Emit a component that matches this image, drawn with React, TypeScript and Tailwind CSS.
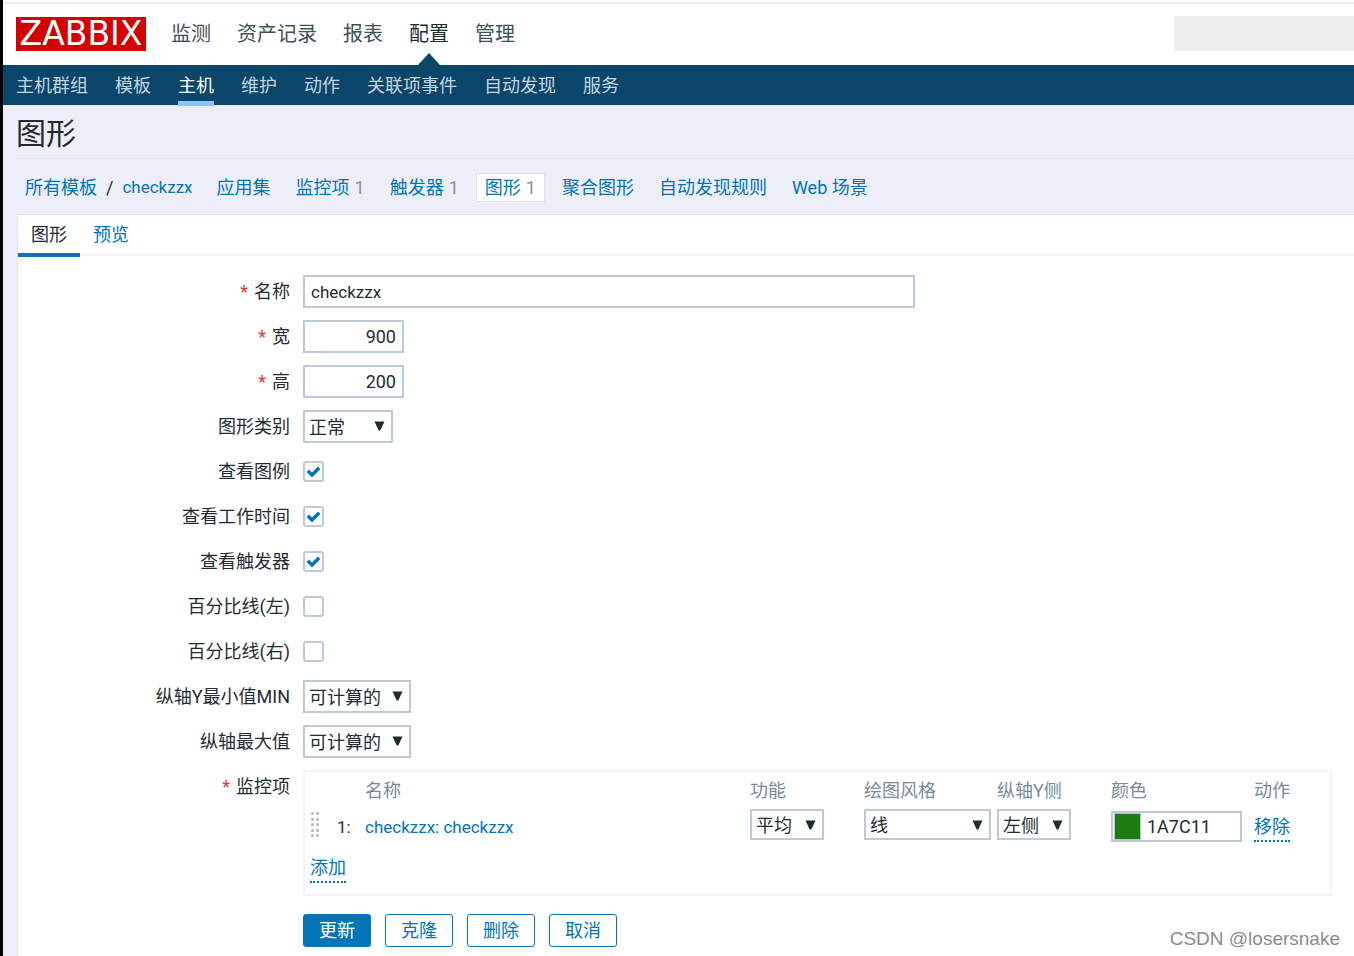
import type { ReactNode } from "react";

const mainMenu = ["监测", "资产记录", "报表", "配置", "管理"];
const subMenu = ["主机群组", "模板", "主机", "维护", "动作", "关联项事件", "自动发现", "服务"];

const objectLinks = [
  { label: "应用集" },
  { label: "监控项", count: 1 },
  { label: "触发器", count: 1 },
  { label: "图形", count: 1, active: true },
  { label: "聚合图形" },
  { label: "自动发现规则" },
  { label: "Web 场景" },
];

const checkboxes = [
  { id: "legend", label: "查看图例", checked: true },
  { id: "work-period", label: "查看工作时间", checked: true },
  { id: "triggers", label: "查看触发器", checked: true },
  { id: "percent-left", label: "百分比线(左)", checked: false },
  { id: "percent-right", label: "百分比线(右)", checked: false },
];

const Row = ({ id, label, required, children }: { id: string; label: string; required?: boolean; children: ReactNode }) => (
  <div className="flex gap-[13px]">
    <label htmlFor={id} className="w-[272px] shrink-0 text-right leading-[33px]">
      {required && <span className="mr-1.5 text-[#e33734]">*</span>}
      {label}
    </label>
    {children}
  </div>
);

const Select = ({ id, value, label, className }: { id: string; value: string; label?: string; className: string }) => (
  <div className="relative inline-block align-top">
    <select
      id={id}
      aria-label={label}
      className={`block appearance-none border-2 border-[#bfcad6] bg-white pt-[3px] pl-1 text-[18px] leading-6 outline-none ${className}`}
    >
      <option>{value}</option>
    </select>
    <svg className="pointer-events-none absolute top-[11px] right-2 h-[10px] w-[11px]" viewBox="0 0 11 10">
      <path d="M0.5 0.5h10L6.3 9.5H4.7z" fill="#1f2c33" />
    </svg>
  </div>
);

const Checkbox = ({ id, checked }: { id: string; checked: boolean }) => (
  <div className="relative my-[6px] h-[21px] w-[21px]">
    <input
      id={id}
      type="checkbox"
      defaultChecked={checked}
      className="peer block h-[21px] w-[21px] appearance-none rounded-[3px] border-2 border-[#bfcad6] bg-white"
    />
    <svg className="pointer-events-none absolute inset-0 hidden peer-checked:block" width="21" height="21" viewBox="0 0 21 21">
      <path d="M4.8 9.8l4.2 4.2 7.2-7.2" fill="none" stroke="#0275b8" strokeWidth="3.4" />
    </svg>
  </div>
);

const DragHandle = () => (
  <svg width="10" height="26" viewBox="0 0 10 26" fill="#b4bfc9">
    {[0, 6, 11, 17, 22].map((y) => (
      <g key={y}>
        <rect x="1" y={y} width="3" height="3" rx="1" />
        <rect x="6" y={y} width="3" height="3" rx="1" />
      </g>
    ))}
  </svg>
);

const Header = () => (
  <header>
    <div className="flex h-[65px] items-center justify-between bg-white pt-0.5 pl-[13px]">
      <div className="flex items-center gap-[25px]">
        <a
          href="#"
          className="flex h-[34px] w-[130px] items-center justify-center bg-[#d40000] font-['DejaVu_Sans',sans-serif] text-[33px] leading-none text-white"
        >
          ZABBIX
        </a>
        <nav className="flex gap-[26px] pt-px text-[20px] text-[#3f5059]">
          {mainMenu.map((item) => (
            <a key={item} href="#" className={item === "配置" ? "relative text-[#1f2c33]" : ""}>
              {item}
              {item === "配置" && (
                <svg className="absolute top-[33px] left-2" width="24" height="13" viewBox="0 0 24 13">
                  <path d="M1 13L12 1l11 12z" fill="#0a466a" />
                </svg>
              )}
            </a>
          ))}
        </nav>
      </div>
      <div className="h-[35px] w-[180px] bg-[#eeeeee]" />
    </div>
    <nav className="flex h-10 gap-[27px] bg-[#0a466a] pl-[13px] text-[18px] leading-[42px] text-[#c3d4e0]">
      {subMenu.map((item) => (
        <a key={item} href="#" className={item === "主机" ? "h-[41px] border-b-5 border-[#85c8f8] text-white" : ""}>
          {item}
        </a>
      ))}
    </nav>
  </header>
);

const Breadcrumbs = () => (
  <nav className="flex h-[55px] items-center pt-0.5 text-[18px] text-[#0275b8]">
    <div className="mr-4 flex items-center gap-[9px] pl-[9px]">
      <a href="#">所有模板</a>
      <span className="text-[#1f2c33]">/</span>
      <a href="#" className="text-[17px]">checkzzx</a>
    </div>
    <div className="flex items-center gap-[9px]">
      {objectLinks.map(({ label, count, active }) => (
        <a
          key={label}
          href="#"
          className={active ? "border border-[#dfe4e7] bg-white px-2 leading-[27px]" : "px-2 leading-[27px]"}
        >
          {label}
          {count && <span className="ml-[5px] text-[#8696a0]">{count}</span>}
        </a>
      ))}
    </div>
  </nav>
);

const ItemsTable = () => (
  <div className="mr-[22px] min-w-0 flex-1 border-2 border-[#f1f1f8] px-[5px] pt-1 pb-[9px]">
    <table className="w-full table-fixed text-left">
      <colgroup>
        <col className="w-[27px]" />
        <col className="w-[28px]" />
        <col />
        <col className="w-[114px]" />
        <col className="w-[133px]" />
        <col className="w-[114px]" />
        <col className="w-[143px]" />
        <col className="w-[71px]" />
      </colgroup>
      <thead className="text-[#768d99]">
        <tr className="h-[29px]">
          <th className="font-normal" />
          <th className="font-normal" />
          <th className="font-normal">名称</th>
          <th className="font-normal">功能</th>
          <th className="font-normal">绘图风格</th>
          <th className="font-normal">纵轴Y侧</th>
          <th className="font-normal">颜色</th>
          <th className="font-normal">动作</th>
        </tr>
      </thead>
      <tbody>
        <tr className="h-[42px]">
          <td className="pb-0.5"><DragHandle /></td>
          <td className="pt-1 text-[17px]">1:</td>
          <td className="pt-1 text-[17px]">
            <a href="#" className="text-[#0275b8]">checkzzx: checkzzx</a>
          </td>
          <td className="pb-1"><Select id="calc-fnc" label="功能" value="平均" className="h-[31px] w-[74px]" /></td>
          <td className="pb-1"><Select id="draw-type" label="绘图风格" value="线" className="h-[31px] w-[127px]" /></td>
          <td className="pb-1"><Select id="yaxis-side" label="纵轴Y侧" value="左侧" className="h-[31px] w-[74px]" /></td>
          <td>
            <div className="flex h-[31px] w-[131px] items-center border-2 border-[#bfcad6] bg-white">
              <button aria-label="选择颜色" className="ml-px h-[27px] w-[27px] shrink-0 border border-[#b8c4d2] bg-[#1a7c11]" />
              <input aria-label="颜色" defaultValue="1A7C11" className="w-full min-w-0 pl-1.5 outline-none" />
            </div>
          </td>
          <td className="pt-0.5">
            <button className="border-b-2 border-dotted border-[#0275b8] leading-[26px] text-[#0275b8]">移除</button>
          </td>
        </tr>
        <tr className="h-[38px]">
          <td colSpan={8} className="pt-1">
            <button className="border-b-2 border-dotted border-[#0275b8] leading-[26px] text-[#0275b8]">添加</button>
          </td>
        </tr>
      </tbody>
    </table>
  </div>
);

const GraphForm = () => (
  <form className="flex flex-col gap-3 pt-[19px] pb-[9px]" onSubmit={(e) => e.preventDefault()}>
    <Row id="name" label="名称" required>
      <input
        id="name"
        defaultValue="checkzzx"
        className="h-[33px] w-[612px] border-2 border-[#bfcad6] bg-white px-1.5 text-[17px] outline-none"
      />
    </Row>
    <Row id="width" label="宽" required>
      <input id="width" defaultValue="900" className="h-[33px] w-[101px] border-2 border-[#bfcad6] px-1.5 text-right outline-none" />
    </Row>
    <Row id="height" label="高" required>
      <input id="height" defaultValue="200" className="h-[33px] w-[101px] border-2 border-[#bfcad6] px-1.5 text-right outline-none" />
    </Row>
    <Row id="graph-type" label="图形类别">
      <Select id="graph-type" value="正常" className="h-[33px] w-[90px]" />
    </Row>
    {checkboxes.map(({ id, label, checked }) => (
      <Row key={id} id={id} label={label}>
        <Checkbox id={id} checked={checked} />
      </Row>
    ))}
    <Row id="ymin" label="纵轴Y最小值MIN">
      <Select id="ymin" value="可计算的" className="h-[33px] w-[108px]" />
    </Row>
    <Row id="ymax" label="纵轴最大值">
      <Select id="ymax" value="可计算的" className="h-[33px] w-[108px]" />
    </Row>
    <Row id="calc-fnc" label="监控项" required>
      <ItemsTable />
    </Row>
    <div className="mt-1.5 ml-[285px] flex gap-3.5">
      <button className="h-[33px] rounded-[3px] border border-[#0275b8] bg-[#0275b8] px-[15px] leading-[31px] text-white">更新</button>
      {["克隆", "删除", "取消"].map((label) => (
        <button key={label} className="h-[33px] rounded-[3px] border border-[#0275b8] bg-white px-[15px] leading-[31px] text-[#0275b8]">
          {label}
        </button>
      ))}
    </div>
  </form>
);

export default function App() {
  return (
    <div className="relative flex min-h-screen flex-col border-l-3 border-black bg-[#eeeef8] font-[Roboto,'Noto_Sans_CJK_SC',sans-serif] text-[18px] text-[#1f2c33]">
      <Header />
      <main className="flex flex-1 flex-col pl-[13px]">
        <h1 className="h-[54px] border-b-2 border-[#e2e8ec] text-[30px] leading-[58px]">图形</h1>
        <Breadcrumbs />
        <section className="ml-px flex-1 border-t border-l border-[#dfe4e7] bg-white">
          <div className="flex h-[41px] border-b-2 border-[#f1f1f8] leading-[37px]">
            <button className="h-[42px] border-b-4 border-[#0275b8] px-[13px]">图形</button>
            <button className="h-[42px] border-b-4 border-transparent px-[13px] text-[#0275b8]">预览</button>
          </div>
          <GraphForm />
        </section>
      </main>
      <p className="absolute right-3.5 bottom-1 font-['Liberation_Sans',sans-serif] text-[19px] leading-[26px] text-[#8c8c8c]">
        CSDN @losersnake
      </p>
      <div className="absolute top-0.5 right-0 left-0 h-0.5 bg-[#ececec]" />
    </div>
  );
}
